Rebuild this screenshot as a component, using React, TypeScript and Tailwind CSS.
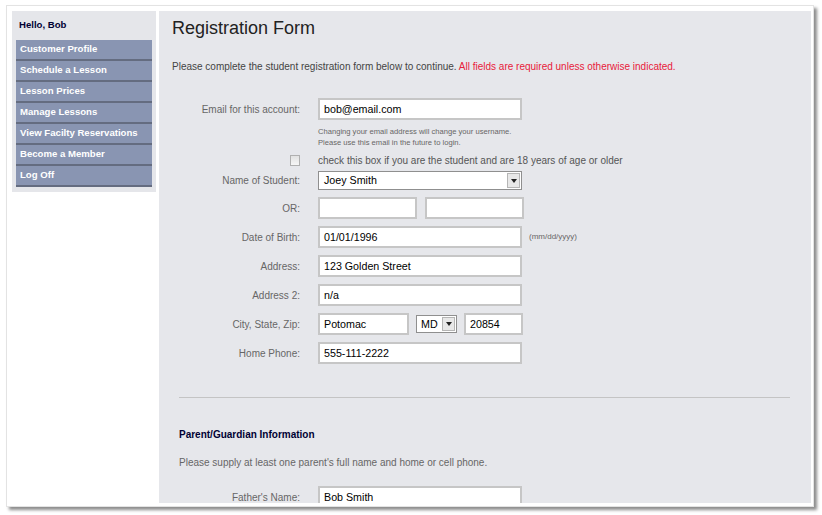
import React from "react";

const menuItems = [
    "Customer Profile",
    "Schedule a Lesson",
    "Lesson Prices",
    "Manage Lessons",
    "View Facilty Reservations",
    "Become a Member",
    "Log Off",
];

function Row({ label, children, className = "" }: { label: string; children: React.ReactNode; className?: string }) {
    return (
        <div className={`flex items-center gap-[18px] ${className}`}>
            <div className="w-[128px] text-right text-[10px] text-[#666]">{label}</div>
            {children}
        </div>
    );
}

function TextBox({ value = "", w = "w-[204px]" }: { value?: string; w?: string }) {
    return (
        <div className={`${w} h-[22px] bg-white border-2 border-[#c6c6c6] pl-[4px] flex items-center text-[10.7px] text-black`}>
            {value}
        </div>
    );
}

function SelectArrow() {
    return (
        <div className="w-[15px] h-full p-[1px]">
            <div className="w-full h-full bg-[#e8e8e8] border border-[#b5b5b5] flex items-center justify-center">
                <svg width="6" height="4" viewBox="0 0 6 4">
                    <path d="M0 0h6L3 4z" fill="#222" />
                </svg>
            </div>
        </div>
    );
}

export default function App() {
    return (
        <div className="w-[822px] h-[515px] bg-white pt-[5px] pl-[6px] font-['Liberation_Sans',Arial,sans-serif]">
            <div className="w-[808px] h-[502px] bg-white border border-[#e3e3e3] shadow-[3px_3px_3px_rgba(0,0,0,0.45)] pt-[5px] pl-[5px] pr-[2px] pb-[3px] flex gap-[3px] overflow-hidden">
                {/* Sidebar */}
                <div className="w-[144px] self-start bg-[#e5e6ea] px-[4px] pb-[5px]">
                    <div className="h-[29px] flex items-center pl-[3px] text-[9.6px] font-bold text-[#000033]">Hello, Bob</div>
                    {menuItems.map((item) => (
                        <div
                            key={item}
                            className="h-[21px] bg-[#8995b2] border-b-2 border-[#646c80] flex items-center pl-[4px] whitespace-nowrap text-[9.6px] font-bold text-white"
                        >
                            {item}
                        </div>
                    ))}
                </div>

                {/* Main */}
                <div className="flex-1 bg-[#e6e7eb] pl-[13px] pt-[5px] overflow-hidden">
                    <h1 className="h-[24px] leading-[24px] text-[18px] text-[#222]">Registration Form</h1>
                    <p className="mt-[20px] leading-[14px] text-[10px] text-[#444]">
                        Please complete the student registration form below to continue.{" "}
                        <span className="text-[#e8203a]">All fields are required unless otherwise indicated.</span>
                    </p>

                    <Row label="Email for this account:" className="mt-[24px]">
                        <TextBox value="bob@email.com" />
                    </Row>
                    <div className="ml-[146px] mt-[6px] text-[7.6px] leading-[11px] text-[#666]">
                        <div>Changing your email address will change your username.</div>
                        <div>Please use this email in the future to login.</div>
                    </div>
                    <div className="mt-[5px] h-[14px] flex items-center gap-[18px]">
                        <div className="w-[128px] flex justify-end">
                            <div className="w-[10px] h-[11px] border border-[#b0b0b0] bg-gradient-to-b from-[#e2e2e2] to-[#f6f6f6]" />
                        </div>
                        <span className="text-[10px] text-[#555]">check this box if you are the student and are 18 years of age or older</span>
                    </div>
                    <Row label="Name of Student:" className="mt-[4px]">
                        <div className="w-[204px] h-[19px] bg-white border border-[#8f8f8f] flex items-center text-[10.7px] text-black">
                            <span className="flex-1 pl-[5px]">Joey Smith</span>
                            <SelectArrow />
                        </div>
                    </Row>
                    <Row label="OR:" className="mt-[7px]">
                        <div className="flex gap-[8px]">
                            <TextBox w="w-[99px]" />
                            <TextBox w="w-[99px]" />
                        </div>
                    </Row>
                    <Row label="Date of Birth:" className="mt-[7px]">
                        <TextBox value="01/01/1996" />
                        <span className="-ml-[11px] text-[8px] text-[#666]">(mm/dd/yyyy)</span>
                    </Row>
                    <Row label="Address:" className="mt-[7px]">
                        <TextBox value="123 Golden Street" />
                    </Row>
                    <Row label="Address 2:" className="mt-[7px]">
                        <TextBox value="n/a" />
                    </Row>
                    <Row label="City, State, Zip:" className="mt-[7px]">
                        <div className="flex items-center gap-[7px]">
                            <TextBox value="Potomac" w="w-[91px]" />
                            <div className="w-[41px] h-[18px] bg-white border border-[#8f8f8f] flex items-center text-[10.7px] text-black">
                                <span className="flex-1 pl-[4px]">MD</span>
                                <SelectArrow />
                            </div>
                            <TextBox value="20854" w="w-[59px]" />
                        </div>
                    </Row>
                    <Row label="Home Phone:" className="mt-[7px]">
                        <TextBox value="555-111-2222" />
                    </Row>

                    <div className="mt-[33px] ml-[7px] mr-[21px] h-px bg-[#c4c4c4]" />

                    <h2 className="mt-[30px] ml-[7px] leading-[14px] text-[10px] font-bold text-[#000033]">Parent/Guardian Information</h2>
                    <p className="mt-[14px] ml-[7px] leading-[14px] text-[10px] text-[#666]">
                        Please supply at least one parent's full name and home or cell phone.
                    </p>
                    <Row label="Father's Name:" className="mt-[16px]">
                        <TextBox value="Bob Smith" />
                    </Row>
                </div>
            </div>
        </div>
    );
}
